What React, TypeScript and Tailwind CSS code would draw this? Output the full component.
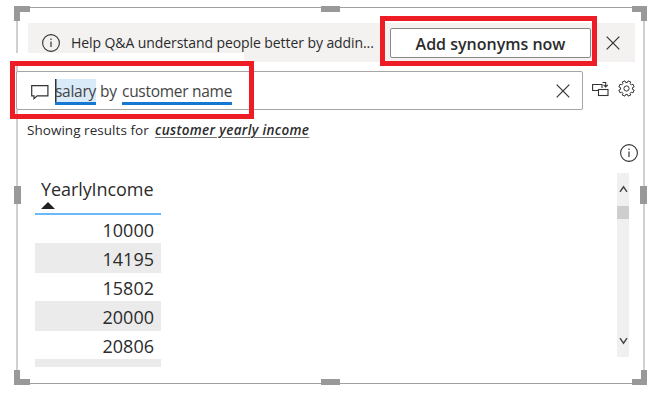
import type { ReactNode } from 'react';

function InfoIcon({ className = '' }: { className?: string }) {
  return (
    <svg className={className} width="20" height="20" viewBox="0 0 20 20" fill="none" stroke="#333" strokeWidth="1.1">
      <circle cx="10" cy="10" r="8.4" />
      <path d="M10 8.6V14" strokeWidth="1.2" />
      <path d="M10 5.6v1.5" strokeWidth="1.2" />
    </svg>
  );
}

function CloseIcon({ className = '' }: { className?: string }) {
  return (
    <svg className={className} width="14" height="14" viewBox="0 0 14 14" fill="none" stroke="#333" strokeWidth="1.2">
      <path d="M.7 .7l12.6 12.6M13.3 .7L.7 13.3" />
    </svg>
  );
}

function GearIcon() {
  const points: string[] = [];
  for (let i = 0; i < 8; i++) {
    const at = (deg: number, r: number) => {
      const a = ((i * 45 + 22.5 + deg) * Math.PI) / 180;
      return `${(8.5 + r * Math.cos(a)).toFixed(2)},${(8.5 + r * Math.sin(a)).toFixed(2)}`;
    };
    points.push(at(-14, 6), at(-11, 7.8), at(11, 7.8), at(14, 6));
  }
  return (
    <svg width="17" height="17" viewBox="0 0 17 17" fill="none" stroke="#333" strokeWidth="1">
      <polygon points={points.join(' ')} strokeLinejoin="round" />
      <circle cx="8.5" cy="8.5" r="2.6" />
    </svg>
  );
}

function ConvertIcon() {
  return (
    <svg width="17" height="16" viewBox="0 0 17 16" fill="none" stroke="#333" strokeWidth="1.1">
      <path d="M6 9.5H.6v-6H10v3.5" />
      <rect x="6.5" y="8.5" width="9.5" height="6" />
      <path d="M10.5 1.5h3.2v4M11.5 3.9l2.2 2 2.2-2" />
    </svg>
  );
}

function Term({ children, className = '' }: { children: ReactNode; className?: string }) {
  return <span className={`h-[26px] border-b-[3px] border-[#1579d3] leading-[24px] ${className}`}>{children}</span>;
}

const rows = [
  { value: '10000', style: 'h-[28px] bg-white' },
  { value: '14195', style: 'h-[30px] bg-[#ebebeb]' },
  { value: '15802', style: 'h-[28px] bg-white' },
  { value: '20000', style: 'h-[30px] bg-[#ebebeb]' },
  { value: '20806', style: 'h-[28px] bg-white' },
  { value: '', style: 'h-[8px] bg-[#ebebeb]' },
];

const handles = [
  'left-[14px] top-[6px] h-[6px] w-[16px]',
  'left-[14px] top-[6px] h-[15px] w-[6px]',
  'left-[321px] top-[6px] h-[6px] w-[19px]',
  'left-[632px] top-[6px] h-[6px] w-[15px]',
  'left-[641px] top-[6px] h-[15px] w-[6px]',
  'left-[14px] top-[186px] h-[18px] w-[7px]',
  'left-[640px] top-[186px] h-[18px] w-[7px]',
  'left-[14px] top-[370px] h-[15px] w-[6px]',
  'left-[14px] top-[379px] h-[6px] w-[16px]',
  'left-[321px] top-[379px] h-[6px] w-[19px]',
  'left-[632px] top-[379px] h-[6px] w-[15px]',
  'left-[641px] top-[370px] h-[15px] w-[6px]',
];

export default function App() {
  return (
    <main className="relative h-[400px] w-[655px] overflow-hidden bg-white pl-4 pt-[7px] font-['Open_Sans','Noto_Sans',sans-serif] text-[#2b2b2b]">
      <section className="flex h-[377px] w-[629px] flex-col border-x-2 border-y border-x-[#d0d0d0] border-y-[#a0a0a0]">
        <header className="ml-[10px] mt-[15px] flex h-[39px] w-[607px] shrink-0 items-center bg-[#f3f2f1]">
          <InfoIcon className="ml-[13px] shrink-0" />
          <span className="ml-[10px] w-[319px] whitespace-nowrap text-[14px] leading-5 tracking-[-0.08px]">
            Help Q&amp;A understand people better by addin...
          </span>
          <button className="flex h-[30px] w-[201px] items-center justify-center rounded-[2px] border border-[#8a8886] bg-white pt-[3px] text-[16px] font-semibold">
            <span className="whitespace-nowrap">Add synonyms now</span>
          </button>
          <CloseIcon className="ml-[15px]" />
        </header>

        <div className="-ml-[2px] mt-[9px] flex shrink-0 items-start">
          <div className="z-10 flex h-[39px] w-[567px] items-start rounded-[2px] border border-[#a6a6a6] bg-white text-[15.5px] text-[#444]">
            <svg className="ml-[14px] mt-[11px]" width="18" height="17" viewBox="0 0 18 17" fill="none" stroke="#333" strokeWidth="1.2">
              <path d="M.7 2.6h16.2v10.2H6.2L3 15.6v-2.8H.7z" />
            </svg>
            <div className="ml-[6px] mt-[7px] flex whitespace-nowrap tracking-[-0.28px]">
              <Term className="w-[41px] bg-[#d9eaf8] shadow-[inset_1.5px_0_#333]">salary</Term>
              <span className="w-[26px] pl-[4px] leading-[24px]">by</span>
              <Term className="w-[110px]">customer name</Term>
            </div>
            <CloseIcon className="ml-auto mr-[12px] mt-[12px]" />
          </div>
          <div className="ml-[9px] mt-[9px] flex items-center gap-[9px]">
            <ConvertIcon />
            <GearIcon />
          </div>
        </div>

        <div className="ml-[9px] mt-[10px] flex h-5 shrink-0 items-center whitespace-nowrap text-[13.5px] leading-5">
          <span className="w-[128px] tracking-[0.04px]">Showing results for</span>
          <span className="font-semibold italic tracking-[0.33px] underline decoration-[#777] decoration-1 underline-offset-2">customer yearly income</span>
        </div>

        <div className="flex">
          <div className="ml-[17px] mt-[37px] w-[126px]">
            <div className="h-[38px] border-b-2 border-[#6cb8fb] pl-[6px]">
              <div className="h-[25px] whitespace-nowrap text-[18px] leading-[25px] tracking-[-0.08px]">YearlyIncome</div>
              <svg width="14" height="7" viewBox="0 0 14 7" fill="#222"><path d="M7 0l7 7H0z" /></svg>
            </div>
            {rows.map((row, i) => (
              <div key={i} className={`flex items-center justify-end pr-[7px] text-[18px] leading-none ${row.style}`}>
                <span className="mt-[2px]">{row.value}</span>
              </div>
            ))}
          </div>
          <div className="ml-auto mr-[4px] flex w-[20px] flex-col">
            <InfoIcon className="mt-[3px]" />
            <div className="-ml-[2px] mt-[10px] flex h-[184px] w-[12px] flex-col items-center bg-[#f0f0f0]">
              <svg className="mt-[12px]" width="9" height="8" viewBox="0 0 9 8" fill="none" stroke="#444" strokeWidth="1.4"><path d="M1 6.8l3.5-5L8 6.8" /></svg>
              <div className="mt-[13px] h-[13px] w-[12px] bg-[#cecece]" />
              <svg className="mb-[12px] mt-auto" width="9" height="8" viewBox="0 0 9 8" fill="none" stroke="#444" strokeWidth="1.4"><path d="M1 1.2l3.5 5L8 1.2" /></svg>
            </div>
          </div>
        </div>
      </section>

      {handles.map((place) => (
        <i key={place} className={`absolute bg-[#999] ${place}`} />
      ))}
      <i className="absolute left-[10px] top-[53px] h-[9px] w-[234px] bg-white" />
      <i className="absolute left-[10px] top-[61px] z-20 h-[58px] w-[244px] border-[5px] border-[#ee1c25]" />
      <i className="absolute left-[380px] top-[16px] z-20 h-[50px] w-[217px] border-[5px] border-[#ee1c25]" />
    </main>
  );
}
